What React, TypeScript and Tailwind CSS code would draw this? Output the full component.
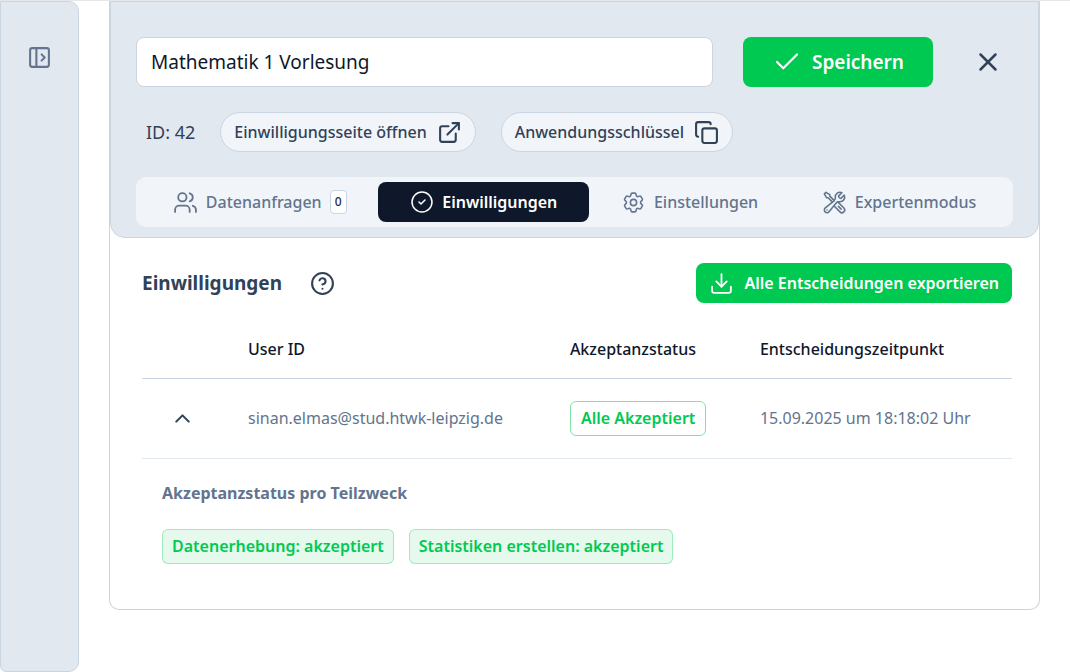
import React, { useState, type ReactNode } from "react";
import {
  Check,
  ChevronDown,
  ChevronUp,
  CircleCheck,
  CircleHelp,
  Copy,
  Download,
  ExternalLink,
  PanelLeftOpen,
  Users,
  X,
} from "lucide-react";
import { HiOutlineCog6Tooth, HiOutlineWrenchScrewdriver } from "react-icons/hi2";

function Sidebar() {
  return (
    <aside className="flex w-[79px] shrink-0 flex-col items-center rounded-r-[10px] rounded-bl-[6px] border border-slate-300 bg-slate-200 pt-[43px]">
      <button type="button" aria-label="Seitenleiste öffnen" className="text-slate-500">
        <PanelLeftOpen size={25} />
      </button>
    </aside>
  );
}

function PillButton({ children, icon }: { children: ReactNode; icon: ReactNode }) {
  return (
    <button
      type="button"
      className="flex h-10 items-center gap-[10px] rounded-full border border-slate-300 bg-slate-100 px-[13px] font-medium text-slate-700"
    >
      {children}
      {icon}
    </button>
  );
}

function Tab({
  active,
  icon,
  label,
  count,
  onSelect,
}: {
  active: boolean;
  icon: ReactNode;
  label: string;
  count?: number;
  onSelect: () => void;
}) {
  return (
    <button
      type="button"
      role="tab"
      aria-selected={active}
      onClick={onSelect}
      className={
        active
          ? "flex h-10 flex-auto items-center justify-center gap-2 rounded-lg bg-slate-900 font-semibold text-white"
          : "flex h-10 flex-auto items-center justify-center gap-2 rounded-lg font-medium text-slate-500"
      }
    >
      {icon}
      {label}
      {count !== undefined && (
        <span className="flex h-6 w-[17px] items-center justify-center rounded border border-slate-300 bg-white text-xs font-medium text-slate-800">
          {count}
        </span>
      )}
    </button>
  );
}

const tabs = [
  { label: "Datenanfragen", icon: <Users size={25} strokeWidth={1.75} />, count: 0 },
  { label: "Einwilligungen", icon: <CircleCheck size={24} strokeWidth={1.5} /> },
  { label: "Einstellungen", icon: <HiOutlineCog6Tooth size={25} /> },
  { label: "Expertenmodus", icon: <HiOutlineWrenchScrewdriver size={25} /> },
];

function Header() {
  const [selected, setSelected] = useState(1);
  return (
    <header className="rounded-b-[15px] border border-slate-300 bg-slate-200 px-[25px] pt-[35px] pb-[10px]">
      <div className="flex items-center">
        <input
          aria-label="Name der Anwendung"
          defaultValue="Mathematik 1 Vorlesung"
          className="h-[50px] min-w-0 flex-1 rounded-lg border border-slate-300 bg-white px-[14px] text-[19px] text-slate-900"
        />
        <button
          type="button"
          className="ml-[30px] flex h-[50px] w-[190px] items-center justify-center gap-[10px] rounded-lg bg-green-500 text-[19px] font-semibold text-white"
        >
          <Check size={30} strokeWidth={1.75} />
          Speichern
        </button>
        <button
          type="button"
          aria-label="Schließen"
          className="ml-[30px] flex h-[50px] w-[50px] items-center justify-center text-slate-700"
        >
          <X size={30} strokeWidth={2} />
        </button>
      </div>
      <div className="mt-[25px] flex items-center gap-[25px]">
        <span className="pl-[10px] text-lg text-slate-700">ID: 42</span>
        <PillButton icon={<ExternalLink size={25} strokeWidth={2} />}>Einwilligungsseite öffnen</PillButton>
        <PillButton icon={<Copy size={25} strokeWidth={2} />}>Anwendungsschlüssel</PillButton>
      </div>
      <div role="tablist" className="mt-[25px] flex rounded-[10px] bg-slate-100 p-[5px]">
        {tabs.map((tab, i) => (
          <Tab key={tab.label} {...tab} active={i === selected} onSelect={() => setSelected(i)} />
        ))}
      </div>
    </header>
  );
}

function Tag({ children }: { children: ReactNode }) {
  return (
    <span className="flex h-[35px] items-center rounded-md border border-green-500/30 bg-green-500/10 px-[9px] font-semibold text-green-500">
      {children}
    </span>
  );
}

function Consents() {
  const [open, setOpen] = useState(true);
  return (
    <section className="pt-[25px] pr-[27px] pb-[45px] pl-8">
      <div className="flex items-center justify-between">
        <div className="flex items-center gap-[28px] text-slate-700">
          <h2 className="text-[19px] font-bold">Einwilligungen</h2>
          <button type="button" aria-label="Hilfe">
            <CircleHelp size={25} />
          </button>
        </div>
        <button
          type="button"
          className="flex h-10 items-center gap-[10px] rounded-lg bg-green-500 px-[13px] font-semibold text-white"
        >
          <Download size={25} strokeWidth={1.75} />
          Alle Entscheidungen exportieren
        </button>
      </div>

      <table className="mt-[17px] w-full table-fixed text-left">
        <colgroup>
          <col className="w-[96px]" />
          <col className="w-[37%]" />
          <col className="w-[190px]" />
          <col />
        </colgroup>
        <thead>
          <tr className="h-[58px] border-b border-slate-300 font-medium text-slate-900">
            <td />
            <th scope="col" className="px-[10px] font-medium">User ID</th>
            <th scope="col" className="px-[10px] font-medium">Akzeptanzstatus</th>
            <th scope="col" className="px-[10px] font-medium">Entscheidungszeitpunkt</th>
          </tr>
        </thead>
        <tbody>
          <tr className="h-20 border-b border-slate-200 text-slate-500">
            <td className="px-5">
              <button
                type="button"
                aria-expanded={open}
                aria-label="Details anzeigen"
                onClick={() => setOpen(!open)}
                className="flex h-10 w-10 items-center justify-center text-slate-700"
              >
                {open ? <ChevronUp size={25} /> : <ChevronDown size={25} />}
              </button>
            </td>
            <td className="px-[10px]">sinan.elmas@stud.htwk-leipzig.de</td>
            <td className="px-[10px]">
              <span className="inline-flex h-[35px] items-center rounded-md border border-green-500/50 px-[10px] font-semibold text-green-500">
                Alle Akzeptiert
              </span>
            </td>
            <td className="px-[10px]">15.09.2025 um 18:18:02 Uhr</td>
          </tr>
          {open && (
            <tr>
              <td colSpan={4} className="px-5 pt-[22px]">
                <h3 className="font-bold text-slate-500">Akzeptanzstatus pro Teilzweck</h3>
                <div className="mt-6 flex flex-wrap gap-[15px]">
                  <Tag>Datenerhebung: akzeptiert</Tag>
                  <Tag>Statistiken erstellen: akzeptiert</Tag>
                </div>
              </td>
            </tr>
          )}
        </tbody>
      </table>
    </section>
  );
}

export default function App() {
  return (
    <div className="flex min-h-screen border-t border-gray-200 bg-white font-['Noto_Sans','Open_Sans',sans-serif] text-base">
      <Sidebar />
      <main className="min-w-0 flex-1 px-[30px] pb-[30px]">
        <div className="rounded-b-[10px] border-x border-b border-slate-300">
          <Header />
          <Consents />
        </div>
      </main>
    </div>
  );
}
